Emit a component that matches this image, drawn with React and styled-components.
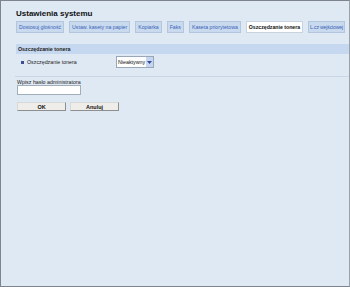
import React from "react";
import styled, { createGlobalStyle } from "styled-components";

const Global = createGlobalStyle`
  html, body { margin: 0; padding: 0; }
  body { font-family: "Liberation Sans", Arial, sans-serif; }
`;

const Page = styled.div`
  box-sizing: border-box;
  width: 350px;
  height: 287px;
  border: 1px solid #7d848e;
  border-right-color: #9aa1aa;
  background: #dfe9f4;
  padding: 8px 0 0 15px;
  overflow: hidden;
`;

const Title = styled.h1`
  margin: 0 0 2px;
  font-size: 8px;
  line-height: 10px;
  font-weight: bold;
  color: #111;
`;

const Tabs = styled.div`
  display: flex;
  gap: 5px;
  white-space: nowrap;
  height: 12px;
  margin-bottom: 11px;
`;

const Tab = styled.div`
  box-sizing: border-box;
  height: 12px;
  padding: 0 ${(p) => (p.$last ? 1 : 2)}px;
  font-size: 5.2px;
  letter-spacing: ${(p) => (p.$last ? "-0.2px" : "0")};
  line-height: 11px;
  border: 1px solid ${(p) => (p.$active ? "#c9d3df" : "#b4c6de")};
  background: ${(p) => (p.$active ? "#ffffff" : "#c9daef")};
  color: ${(p) => (p.$active ? "#111" : "#3a62b6")};
  font-weight: ${(p) => (p.$active ? "bold" : "normal")};
  flex: none;
`;

const SectionHead = styled.div`
  height: 10px;
  margin-right: -1px;
  background: #c5d8ef;
  font-size: 5.3px;
  line-height: 10px;
  font-weight: bold;
  color: #222;
  padding-left: 2px;
`;

const Row = styled.div`
  display: flex;
  align-items: center;
  height: 12px;
  margin-top: 2px;
  padding-left: 5px;
`;

const Bullet = styled.span`
  width: 3px;
  height: 3px;
  background: #3b4f92;
  margin-right: 3px;
`;

const Label = styled.span`
  font-size: 5.3px;
  color: #222;
  width: 89px;
`;

const Select = styled.div`
  display: flex;
  height: 10px;
  border: 1px solid #9aa7b8;
  background: #fff;
`;

const SelectValue = styled.span`
  font-size: 5.3px;
  line-height: 10px;
  color: #111;
  padding: 0 1px;
`;

const SelectArrow = styled.span`
  width: 7px;
  background: #c7d6f0;
  display: flex;
  align-items: center;
  justify-content: center;
`;

const Divider = styled.div`
  height: 1px;
  background: #c9d6e6;
  margin: 8px 0 2px -1px;
`;

const FieldLabel = styled.div`
  font-size: 5.3px;
  line-height: 6px;
  color: #222;
  margin-left: 1px;
`;

const Input = styled.div`
  box-sizing: border-box;
  width: 64px;
  height: 10px;
  margin: 0 0 0 1px;
  border: 1px solid #a2adba;
  background: #fff;
`;

const Buttons = styled.div`
  display: flex;
  gap: 4px;
  margin: 7px 0 0 1px;
`;

const Button = styled.div`
  box-sizing: border-box;
  width: 49px;
  height: 9px;
  border: 1px solid #8e8e8e;
  border-top-color: #d8d8d8;
  border-left-color: #d8d8d8;
  background: #efedea;
  font-size: 5.5px;
  line-height: 8px;
  font-weight: bold;
  text-align: center;
  color: #111;
`;

const tabs = [
  "Dostosuj głośność",
  "Ustaw. kasety na papier",
  "Kopiarka",
  "Faks",
  "Kaseta priorytetowa",
  "Oszczędzanie tonera",
  "L.cz wejściowej",
];

export default function App() {
  return (
    <Page>
      <Global />
      <Title>Ustawienia systemu</Title>
      <Tabs>
        {tabs.map((t, i) => (
          <Tab
            key={t}
            $active={t === "Oszczędzanie tonera"}
            $last={i === tabs.length - 1}
          >
            {t}
          </Tab>
        ))}
      </Tabs>
      <SectionHead>Oszczędzanie tonera</SectionHead>
      <Row>
        <Bullet />
        <Label>Oszczędzanie tonera</Label>
        <Select>
          <SelectValue>Nieaktywny</SelectValue>
          <SelectArrow>
            <svg width="5" height="3" viewBox="0 0 5 3">
              <path d="M0 0 L5 0 L2.5 3 Z" fill="#2d4c9a" />
            </svg>
          </SelectArrow>
        </Select>
      </Row>
      <Divider />
      <FieldLabel>Wpisz hasło administratora</FieldLabel>
      <Input />
      <Buttons>
        <Button>OK</Button>
        <Button>Anuluj</Button>
      </Buttons>
    </Page>
  );
}
